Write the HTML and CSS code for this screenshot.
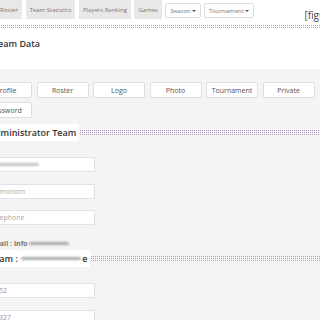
FILE: index.html
```html
<!DOCTYPE html>
<html lang="en">
<head>
  <meta charset="UTF-8">
  <meta name="viewport" content="width=device-width, initial-scale=1.0">
  <title>Team Data</title>
  <link rel="stylesheet" href="styles.css">
</head>

<body>
  <div class="page">
    <!-- Barra superiore -->
    <header class="top">
      <nav class="tabs">
        <a class="tab" href="#">Roster</a>
        <a class="tab" href="#">Team Statistics</a>
        <a class="tab" href="#">Players Ranking</a>
        <a class="tab" href="#">Games</a>
        <span class="drop">Seazon <i class="caret"></i></span>
        <span class="drop">Tournament<i class="caret"></i></span>
        <span class="fig">[figure]</span>
      </nav>
      <div class="dots"></div>
      <h1>Team Data</h1>
    </header>

    <main class="content">
      <!-- Pulsanti sezioni -->
      <div class="btns">
        <button>Profile</button>
        <button>Roster</button>
        <button>Logo</button>
        <button>Photo</button>
        <button>Tournament</button>
        <button>Private</button>
        <button>Password</button>
      </div>

      <h2 class="sec"><span>Administrator Team</span></h2>
      <div class="form form-admin">
        <div class="input"><span class="blur b1"></span></div>
        <input type="text" placeholder="Nomonom">
        <input type="text" placeholder="Telephone">
      </div>

      <p class="mail">Email : info<span class="blur b2"></span></p>

      <h2 class="sec sec-team"><span>Team : <span class="blur b3"></span>e</span></h2>
      <div class="form">
        <input type="text" value="052">
        <input type="text" value="0327">
      </div>
    </main>
  </div>
</body>
</html>
```

FILE: styles.css
```css
/* Stile generale */
body {
  margin: 0;
  font-family: "Open Sans", sans-serif;
  background-color: #f4f4f4;
  overflow: hidden;
}

.page {
  margin-left: -20px;
  width: 345px;
}

/* Intestazione */
.top {
  background-color: #fff;
  height: 69px;
}

.tabs {
  display: flex;
  align-items: center;
  gap: 3.5px;
  padding-left: 16px;
  height: 19px;
  white-space: nowrap;
}

.tab {
  flex-shrink: 0;
  background-color: #e8e8e8;
  height: 19px;
  padding: 0 4px;
  font-size: 6px;
  color: #777;
  text-decoration: none;
  display: flex;
  align-items: center;
}

.drop {
  flex-shrink: 0;
  background-color: #fff;
  border: 1px solid #ddd;
  border-radius: 2px;
  height: 13px;
  padding: 0 4px;
  font-size: 6px;
  color: #777;
  display: flex;
  align-items: center;
  gap: 1px;
  margin-top: 2px;
}

.caret {
  width: 0;
  height: 0;
  border-left: 2px solid transparent;
  border-right: 2px solid transparent;
  border-top: 2px solid #555;
}

.fig {
  flex-shrink: 0;
  align-self: flex-start;
  margin: 9px 0 0 47px;
  font-size: 10px;
  line-height: 12px;
  color: #444;
}

.dots {
  height: 4px;
  margin-top: 6px;
  background: conic-gradient(#ad9dbe 25%, transparent 0) 0 0 / 2px 2px;
}

h1 {
  margin: 0;
  padding: 8px 0 0 13px;
  font-size: 9px;
  font-weight: 600;
  color: #333;
}

/* Pulsanti */
.btns {
  display: flex;
  flex-wrap: wrap;
  gap: 4px 4.5px;
  padding-top: 13px;
}

button {
  width: 52px;
  height: 16px;
  background-color: #fff;
  border: 1px solid #ddd;
  border-radius: 2px;
  font-family: inherit;
  font-size: 7px;
  color: #555;
  padding: 0;
}

/* Titoli sezione */
.sec {
  display: flex;
  align-items: center;
  margin: 6px 0 0;
  font-size: 9px;
  font-weight: 600;
  color: #333;
}

.sec::after {
  content: "";
  flex: 1;
  height: 5px;
  background: conic-gradient(#ad9dbe 25%, transparent 0) 0 0 / 2px 2px;
}

.sec > span {
  background-color: #fff;
  padding: 2px 3px 2px 9px;
  display: flex;
  align-items: center;
  white-space: pre;
}

.sec-team {
  margin-top: 2px;
}

/* Campi */
.form {
  display: flex;
  flex-direction: column;
  gap: 11.5px;
  padding: 16px 0 0 9px;
}

input, .input {
  box-sizing: border-box;
  width: 106px;
  height: 15px;
  padding: 0 5px;
  background-color: #fff;
  border: 1px solid #e2e2e2;
  font-family: inherit;
  font-size: 7px;
  color: #999;
}

.form-admin input {
  padding-left: 0;
}

input::placeholder {
  color: #aaa;
}

.input {
  display: flex;
  align-items: center;
}

.blur {
  display: inline-block;
  height: 3px;
  background-color: #aaa;
  border-radius: 2px;
  filter: blur(1px);
}

.b1 { width: 44px; background-color: #c4c4c4; }
.b2 { width: 40px; margin-left: 1px; }
.b3 { width: 60px; margin: 0 1px 0 1px; }

.mail {
  margin: 14px 0 0 9px;
  font-size: 7px;
  font-weight: 700;
  color: #777;
  display: flex;
  align-items: center;
}
```
